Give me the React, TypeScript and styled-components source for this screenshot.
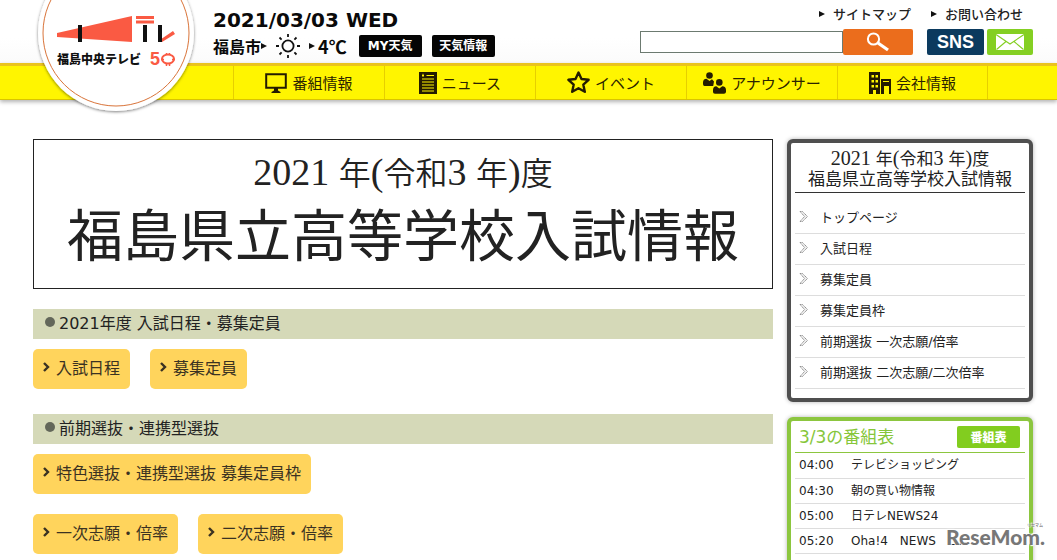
import React from "react";
import styled, { createGlobalStyle } from "styled-components";

const sans = `"DejaVu Sans", "Noto Sans CJK JP", sans-serif`;
const jp = `"Noto Sans CJK JP", sans-serif`;
const serif = `"Liberation Serif", "Noto Sans CJK JP", serif`;

const GlobalStyle = createGlobalStyle`
  *, *::before, *::after { box-sizing: border-box; }
  body { margin: 0; background: #fff; color: #222; font-family: ${sans}; }
  h1, h2, p, ul { margin: 0; padding: 0; font-weight: 400; }
  ul { list-style: none; }
  a { color: inherit; text-decoration: none; }
  button { border: 0; padding: 0; font: inherit; cursor: pointer; }
  svg { display: block; flex: none; }
`;

const Page = styled.div`
  position: relative;
  height: 100vh;
  overflow: hidden;
`;

const Header = styled.header`
  position: relative;
`;

const HeaderTop = styled.div`
  display: flex;
  justify-content: space-between;
  min-height: 63px;
  padding: 0 24px 0 213px;
  background: linear-gradient(#fff 60%, #fbfbfb);
`;

const LogoLink = styled.a`
  position: absolute;
  z-index: 2;
  top: 0;
  left: 32px;
`;

const Today = styled.div`
  padding-top: 8px;
  color: #0a0a0a;
`;

const DateText = styled.p`
  font-size: 20px;
  font-weight: 700;
  line-height: 24px;
`;

const Weather = styled.div`
  display: flex;
  align-items: center;
  height: 28px;
  font: 700 16px/24px ${jp};
`;

const Pointer = styled.span<{ $size: number }>`
  flex: none;
  border: ${(p) => p.$size}px solid transparent;
  border-left: ${(p) => p.$size * 2}px solid #111;
  border-right: 0;
`;

const Sun = styled.svg`
  margin: 0 8px;
`;

const Temperature = styled.span`
  margin: 0 12px 0 3px;
  font-size: 18px;
`;

const BlackLink = styled.a`
  width: 63px;
  margin-right: 10px;
  border-radius: 2px;
  background: #050505;
  color: #fff;
  font: 700 12px/22px "DejaVu Sans", ${jp};
  text-align: center;
  white-space: nowrap;
`;

const Tools = styled.div`
  display: flex;
  flex-direction: column;
  align-items: flex-end;
`;

const HelpLinks = styled.div`
  display: flex;
  gap: 20px;
  padding: 4px 10px 0 0;
`;

const HelpLink = styled.a`
  display: flex;
  align-items: center;
  gap: 8px;
  font: 500 13px/20px ${jp};
`;

const ToolRow = styled.div`
  display: flex;
  padding-top: 5px;
`;

const Search = styled.form`
  display: flex;
  align-items: center;
  margin-right: 14px;
`;

const SearchInput = styled.input`
  width: 203px;
  height: 22px;
  margin: 0;
  padding: 0 4px;
  border: 1px solid #6c7a70;
  background: #fff;
  font: 13px ${sans};
`;

const SearchButton = styled.button`
  display: grid;
  place-items: center;
  width: 70px;
  height: 26px;
  border-radius: 2px;
  background: #eb6d1c;
`;

const ShareLinks = styled.div`
  display: flex;
  gap: 3px;
`;

const ShareLink = styled.a<{ $color: string; $width: number }>`
  display: grid;
  place-items: center;
  width: ${(p) => p.$width}px;
  height: 26px;
  border-radius: 2px;
  background: ${(p) => p.$color};
  color: #fff;
  font: 700 18px/26px "Liberation Sans", sans-serif;
`;

const Nav = styled.nav`
  display: flex;
  height: 37px;
  padding-left: 233px;
  border-top: 3px solid #eac31e;
  border-bottom: 1px solid #d9c400;
  background: #fff500;
  box-shadow: 0 2px 4px rgba(0, 0, 0, 0.3);
`;

const NavItem = styled.a`
  display: flex;
  align-items: center;
  justify-content: center;
  gap: 5px;
  width: 151px;
  border-left: 1px solid #e6cf00;
  color: #2b2300;
  font: 400 15px/20px ${jp};
  &:last-child { border-right: 1px solid #e6cf00; }
`;

const Content = styled.div`
  display: grid;
  grid-template-columns: minmax(0, 1fr) 246px;
  align-items: start;
  gap: 14px;
  padding: 39px 24px 0 33px;
`;

const Banner = styled.h1`
  height: 150px;
  padding-top: 12px;
  border: 1px solid #222;
  color: #222;
  font-family: ${serif};
  font-weight: 400;
  text-align: center;
  white-space: nowrap;
`;

const BannerYear = styled.span`
  display: block;
  font-size: 32px;
  font-weight: 350;
  line-height: 44px;
`;

const Numeral = styled.span<{ $size: number }>`
  font-size: ${(p) => p.$size}px;
  line-height: 0;
`;

const BannerTitle = styled.span`
  display: block;
  font-size: 56px;
  line-height: 82px;
`;

const Section = styled.section`
  margin-bottom: 25px;
  &:first-of-type { margin-top: 20px; }
`;

const SectionTitle = styled.h2`
  display: flex;
  align-items: center;
  gap: 4px;
  height: 30px;
  padding: 0 12px 4px;
  background: #d5d9b8;
  font-size: 16px;
  &::before {
    content: "";
    width: 10px;
    height: 10px;
    border-radius: 50%;
    background: #63675a;
  }
`;

const LinkList = styled.div`
  display: flex;
  flex-wrap: wrap;
  gap: 20px;
  padding-top: 10px;
  & + & { padding-top: 20px; }
`;

const YellowLink = styled.a`
  display: flex;
  align-items: center;
  gap: 6px;
  height: 40px;
  padding: 0 10px 4px;
  border-radius: 5px;
  background: #ffd45c;
  color: #3b3222;
  font-size: 16px;
`;

const Side = styled.aside`
  display: flex;
  flex-direction: column;
  gap: 15px;
`;

const Panel = styled.section<{ $color: string }>`
  padding: 0 4px;
  border: 4px solid ${(p) => p.$color};
  border-radius: 6px;
  background: #fff;
  box-shadow: 0 0 4px rgba(0, 0, 0, 0.3);
`;

const MenuTitle = styled.h2`
  padding: 7px 0 2px;
  border-bottom: 1px solid #333;
  font: 400 17px/20px ${serif};
  text-align: center;
`;

const MenuList = styled.ul`
  padding: 10px 0 9px;
`;

const MenuItem = styled.li`
  border-bottom: 1px solid #ddd;
`;

const MenuLink = styled.a`
  display: flex;
  align-items: center;
  gap: 11px;
  height: 30px;
  padding: 0 4px 3px;
  font-size: 13px;
`;

const GuideHead = styled.div`
  display: flex;
  align-items: center;
  justify-content: space-between;
  height: 32px;
  padding: 0 5px 0 4px;
  border-bottom: 1px solid #8cc63f;
`;

const GuideTitle = styled.h2`
  color: #86c63a;
  font-size: 17px;
  line-height: 24px;
`;

const GuideLink = styled.a`
  width: 63px;
  border-radius: 2px;
  background: #82cd1f;
  color: #fff;
  font: 900 12px/22px ${jp};
  text-align: center;
`;

const Guide = styled.table`
  width: 100%;
  border-collapse: collapse;
  font-size: 12px;
  line-height: 24px;
  tr { border-bottom: 1px solid #ddd; }
  th, td { height: 25px; padding: 0; font-weight: 400; text-align: left; white-space: pre; }
  th { width: 56px; padding-left: 4px; }
`;

const Watermark = styled.div`
  position: absolute;
  right: 12px;
  bottom: 9px;
  color: #777;
  font: 900 21px/28px Lato, sans-serif;
  text-shadow: 0 0 2px #fff, 1px 1px 1px #fff, -1px -1px 1px #fff;
`;

const Ruby = styled.span`
  position: absolute;
  top: -2px;
  right: 2px;
  font: 500 4px/8px ${jp};
`;

const Logo = () => (
  <svg width="168" height="118" viewBox="32 0 168 118" role="img" aria-label="福島中央テレビ">
    <defs>
      <filter id="logo-shadow" x="-10%" y="-10%" width="120%" height="120%">
        <feDropShadow dx="0" dy="1" stdDeviation="1.5" floodOpacity="0.5" />
      </filter>
    </defs>
    <circle cx="116" cy="33" r="78" fill="#fff" filter="url(#logo-shadow)" />
    <circle cx="116" cy="33" r="73" fill="none" stroke="#d9743a" strokeWidth="1" />
    <path d="M57 33 132 16V42L57 37Z" fill="#fa5a43" />
    <path d="M78 25h4v17h-4zM143 25h4v17h-4zM158 25h4v17h-4z" fill="#111" />
    <path d="M136 16h18v3h-18zM136 20.5h18v3h-18zM162 38.5 173 31 175 34 162 42Z" fill="#fa5a43" />
    <text x="57" y="64" fontFamily="Noto Sans CJK JP" fontWeight="900" fontSize="12" fill="#111">福島中央テレビ</text>
    <text x="150" y="65" fontFamily="Liberation Sans" fontWeight="700" fontSize="18" fill="#fa5a43">5</text>
    <g fill="none" stroke="#fa5a43" strokeWidth="2">
      <ellipse cx="168" cy="59" rx="6" ry="4.5" />
      <path d="M166.5 55V53M169.5 55V53M166.5 66V63M169.5 66V63" strokeWidth="1.5" />
      <path d="M161 59.5h3M172 59.5h3" strokeWidth="1.5" />
    </g>
  </svg>
);

const Chevron = () => (
  <svg width="7" height="10" viewBox="0 0 7 10" aria-hidden="true">
    <path d="M1 1 5 5 1 9" fill="none" stroke="#3b3222" strokeWidth="2.4" />
  </svg>
);

const DoubleChevron = () => (
  <svg width="10" height="13" viewBox="0 0 10 13" aria-hidden="true">
    <path d="M1 1.5H3.5L8.5 6.5 3.5 11.5H1L5.5 6.5Z" fill="#eee" stroke="#888" strokeWidth="0.9" strokeDasharray="1.5 0.5" />
  </svg>
);

const navItems: { label: string; icon: React.ReactNode }[] = [
  {
    label: "番組情報",
    icon: (
      <svg width="22" height="22" viewBox="0 0 22 22">
        <path d="M1.2 2.2H20.8V15.8H1.2Z" fill="none" stroke="#241c00" strokeWidth="2" />
        <path d="M9 16h4v2.5l2.5 1.5v1h-9v-1L9 18.5Z" fill="#241c00" />
      </svg>
    ),
  },
  {
    label: "ニュース",
    icon: (
      <svg width="18" height="22" viewBox="0 0 18 22">
        <path d="M0 0H18V22H0Z" fill="#241c00" />
        <path d="M3 3.5H5M7.5 3.5H15M3 7H15M3 10H15M3 13H15M3 16H15M3 19H15" stroke="#fff500" strokeWidth="1.2" />
        <path d="M4 1.8V5" stroke="#fff500" />
      </svg>
    ),
  },
  {
    label: "イベント",
    icon: (
      <svg width="23" height="23" viewBox="0 0 23 23">
        <path d="M11.5 1.5 14.5 8 21.6 8.8 16.3 13.6 17.8 20.8 11.5 17.3 5.2 20.8 6.7 13.6 1.4 8.8 8.5 8Z" fill="none" stroke="#241c00" strokeWidth="2.4" strokeLinejoin="round" />
      </svg>
    ),
  },
  {
    label: "アナウンサー",
    icon: (
      <svg width="23" height="22" viewBox="0 0 23 22" fill="#241c00">
        <circle cx="6.5" cy="3.5" r="3.3" />
        <path d="M0 10.5Q0 7 3.5 6.8L6.5 9 9 7.2 11 9.5 10.2 14H1.5Q0 13.8 0 12Z" />
        <circle cx="16.3" cy="10.4" r="3.3" />
        <path d="M10 18Q10 14.4 13.3 14.2L16.3 16.6 19.3 14.2Q23 14.4 23 18V20Q22.8 21.7 21 21.7H12Q10 21.7 10 20Z" />
      </svg>
    ),
  },
  {
    label: "会社情報",
    icon: (
      <svg width="22" height="22" viewBox="0 0 22 22">
        <path d="M0 0H11V22H7V18H4V22H0ZM12 7H22V22H20V14H15V22H12Z" fill="#241c00" />
        <path d="M2.5 3H5V5.5H2.5ZM6.5 3H9V5.5H6.5ZM2.5 8H5V10.5H2.5ZM6.5 8H9V10.5H6.5ZM2.5 13H5V15.5H2.5ZM6.5 13H9V15.5H6.5ZM14 9H20V10H14Z" fill="#fff500" />
      </svg>
    ),
  },
];

const menuItems = ["トップページ", "入試日程", "募集定員", "募集定員枠", "前期選抜 一次志願/倍率", "前期選抜 二次志願/二次倍率"];

const programmes = [
  ["04:00", "テレビショッピング"],
  ["04:30", "朝の買い物情報"],
  ["05:00", "日テレNEWS24"],
  ["05:20", "Oha!4　NEWS　L..."],
  ["", ""],
];

const Yellow = ({ children }: { children: string }) => (
  <YellowLink href="#">
    <Chevron />
    {children}
  </YellowLink>
);

const SchoolYear = ({ size }: { size: number }) => (
  <>
    <Numeral $size={size}>2021 </Numeral>年<Numeral $size={size}>(</Numeral>令和
    <Numeral $size={size}>3 </Numeral>年<Numeral $size={size}>)</Numeral>度
  </>
);

export default function App() {
  return (
    <Page lang="ja">
      <GlobalStyle />
      <Header>
        <LogoLink href="#"><Logo /></LogoLink>
        <HeaderTop>
          <Today>
            <DateText>2021/03/03 WED</DateText>
            <Weather>
              福島市
              <Pointer $size={3} />
              <Sun width="26" height="24" viewBox="-1 0 26 24" fill="none" stroke="#111" strokeWidth="1.8" aria-label="晴れ">
                <circle cx="12" cy="12" r="5.6" />
                <path d="M12 0V3M12 21V24M0 12H3M21 12H24M3.5 3.5 5.6 5.6M18.4 18.4 20.5 20.5M3.5 20.5 5.6 18.4M18.4 5.6 20.5 3.5" />
              </Sun>
              <Pointer $size={3} />
              <Temperature>4℃</Temperature>
              <BlackLink href="#">MY天気</BlackLink>
              <BlackLink href="#">天気情報</BlackLink>
            </Weather>
          </Today>
          <Tools>
            <HelpLinks>
              <HelpLink href="#"><Pointer $size={3} />サイトマップ</HelpLink>
              <HelpLink href="#"><Pointer $size={3} />お問い合わせ</HelpLink>
            </HelpLinks>
            <ToolRow>
              <Search onSubmit={(e) => e.preventDefault()}>
                <SearchInput type="text" aria-label="サイト内検索" />
                <SearchButton type="submit" aria-label="検索">
                  <svg width="24" height="20" viewBox="0 0 24 20" fill="none" stroke="#fff">
                    <circle cx="7.5" cy="7" r="5.6" strokeWidth="2" />
                    <path d="M12 11 22 18" strokeWidth="3.2" />
                  </svg>
                </SearchButton>
              </Search>
              <ShareLinks>
                <ShareLink href="#" $color="#0b3a5e" $width={57}>SNS</ShareLink>
                <ShareLink href="#" $color="#84cf22" $width={46} aria-label="メール">
                  <svg width="28" height="16" viewBox="0 0 28 16">
                    <path d="M0 0H28V16H0Z" fill="#fff" />
                    <path d="M0 0.5 14 10 28 0.5M0.5 15.5 10 7.5M27.5 15.5 18 7.5" fill="none" stroke="#84cf22" strokeWidth="1.1" />
                  </svg>
                </ShareLink>
              </ShareLinks>
            </ToolRow>
          </Tools>
        </HeaderTop>
        <Nav>
          {navItems.map((item) => (
            <NavItem href="#" key={item.label}>
              {item.icon}
              {item.label}
            </NavItem>
          ))}
        </Nav>
      </Header>
      <Content>
        <main>
          <Banner>
            <BannerYear><SchoolYear size={38} /></BannerYear>
            <BannerTitle>福島県立高等学校入試情報</BannerTitle>
          </Banner>
          <Section>
            <SectionTitle>2021年度 入試日程・募集定員</SectionTitle>
            <LinkList>
              <Yellow>入試日程</Yellow>
              <Yellow>募集定員</Yellow>
            </LinkList>
          </Section>
          <Section>
            <SectionTitle>前期選抜・連携型選抜</SectionTitle>
            <LinkList>
              <Yellow>特色選抜・連携型選抜 募集定員枠</Yellow>
            </LinkList>
            <LinkList>
              <Yellow>一次志願・倍率</Yellow>
              <Yellow>二次志願・倍率</Yellow>
            </LinkList>
          </Section>
        </main>
        <Side>
          <Panel $color="#4f4f4f">
            <MenuTitle><SchoolYear size={20} /><br />福島県立高等学校入試情報</MenuTitle>
            <MenuList>
              {menuItems.map((label) => (
                <MenuItem key={label}>
                  <MenuLink href="#"><DoubleChevron />{label}</MenuLink>
                </MenuItem>
              ))}
            </MenuList>
          </Panel>
          <Panel $color="#8cc63f">
            <GuideHead>
              <GuideTitle>3/3の番組表</GuideTitle>
              <GuideLink href="#">番組表</GuideLink>
            </GuideHead>
            <Guide>
              <tbody>
                {programmes.map(([time, title]) => (
                  <tr key={time}>
                    <th scope="row">{time}</th>
                    <td>{title}</td>
                  </tr>
                ))}
              </tbody>
            </Guide>
          </Panel>
        </Side>
      </Content>
      <Watermark>ReseMom.<Ruby>リセマム</Ruby></Watermark>
    </Page>
  );
}
